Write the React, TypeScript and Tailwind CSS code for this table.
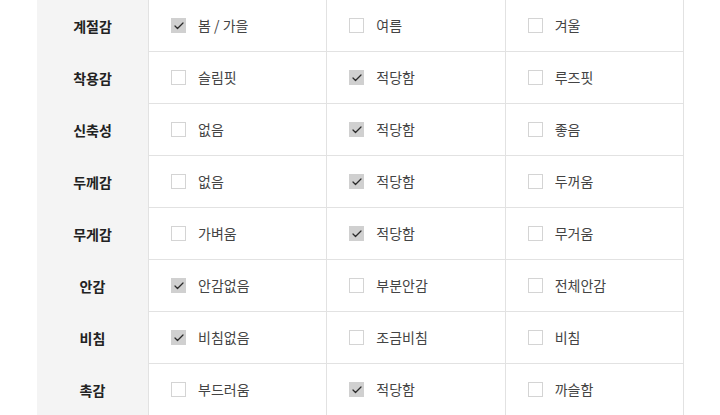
import { Check } from 'lucide-react';

type Option = { label: string; checked: boolean };

const rows: { title: string; options: Option[] }[] = [
  { title: '계절감', options: [{ label: '봄 / 가을', checked: true }, { label: '여름', checked: false }, { label: '겨울', checked: false }] },
  { title: '착용감', options: [{ label: '슬림핏', checked: false }, { label: '적당함', checked: true }, { label: '루즈핏', checked: false }] },
  { title: '신축성', options: [{ label: '없음', checked: false }, { label: '적당함', checked: true }, { label: '좋음', checked: false }] },
  { title: '두께감', options: [{ label: '없음', checked: false }, { label: '적당함', checked: true }, { label: '두꺼움', checked: false }] },
  { title: '무게감', options: [{ label: '가벼움', checked: false }, { label: '적당함', checked: true }, { label: '무거움', checked: false }] },
  { title: '안감', options: [{ label: '안감없음', checked: true }, { label: '부분안감', checked: false }, { label: '전체안감', checked: false }] },
  { title: '비침', options: [{ label: '비침없음', checked: true }, { label: '조금비침', checked: false }, { label: '비침', checked: false }] },
  { title: '촉감', options: [{ label: '부드러움', checked: false }, { label: '적당함', checked: true }, { label: '까슬함', checked: false }] },
];

const Box = ({ checked }: { checked: boolean }) =>
  checked ? (
    <span className="w-[15px] h-[15px] bg-[#d0d0d0] flex items-center justify-center shrink-0">
      <Check className="w-[12px] h-[12px] text-[#2a2a2a]" strokeWidth={2.5} />
    </span>
  ) : (
    <span className="w-[15px] h-[15px] border border-[#d4d4d4] bg-white shrink-0" />
  );

export default function App() {
  return (
    <div
      className="w-[720px] h-[415px] bg-white overflow-hidden pl-[37px]"
      style={{ fontFamily: '"Noto Sans CJK KR", "Noto Sans", sans-serif' }}
    >
      <div className="w-[647px]">
        {rows.map((row) => (
          <div key={row.title} className="flex h-[52px]">
            <div className="w-[112px] bg-[#f4f4f4] flex items-center justify-center text-[14px] font-bold text-[#222] border-r border-[#e2e2e2]">
              {row.title}
            </div>
            {/* options */}
            {row.options.map((opt, i) => (
              <div
                key={opt.label + i}
                className="flex-1 flex items-center gap-3 pl-[22px] border-b border-r border-[#e2e2e2]"
              >
                <Box checked={opt.checked} />
                <span className="text-[14px] text-[#444]">{opt.label}</span>
              </div>
            ))}
          </div>
        ))}
      </div>
    </div>
  );
}
